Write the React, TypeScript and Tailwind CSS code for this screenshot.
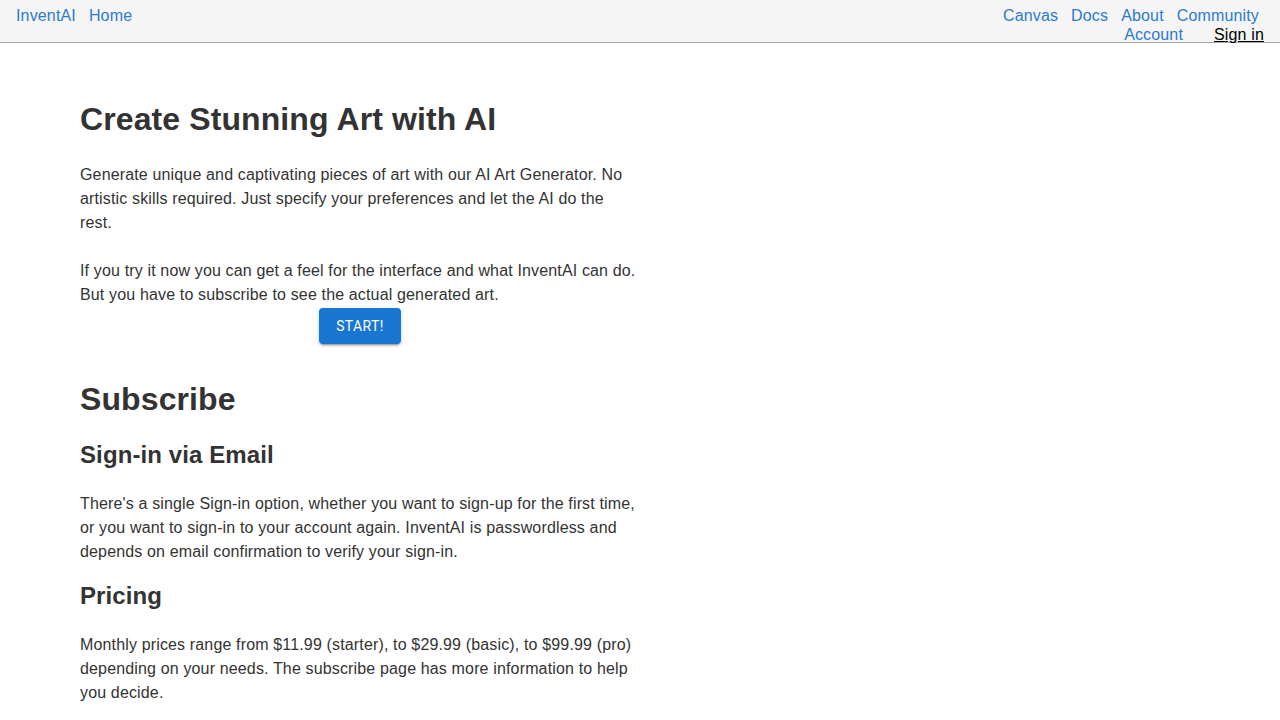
import React from "react";

const font = { fontFamily: '"Liberation Sans", Arial, sans-serif' };

export default function App() {
  return (
    <div className="min-h-[720px] bg-white text-[#333333] tracking-[0.15px]" style={font}>
      <header className="flex h-[43px] justify-between border-b border-[#a8a8a8] bg-[#f5f5f5] text-[16px] leading-[19px]">
        <nav className="flex gap-[13px] pl-[16px] pt-[6px]">
          <a className="text-[#2b7bd0]">InventAI</a>
          <a className="text-[#2b7bd0]">Home</a>
        </nav>
        <div className="flex flex-col items-end pt-[6px]">
          <nav className="mr-[21px] flex gap-[13px]">
            <a className="text-[#2b7bd0]">Canvas</a>
            <a className="text-[#2b7bd0]">Docs</a>
            <a className="text-[#2b7bd0]">About</a>
            <a className="text-[#2b7bd0]">Community</a>
          </nav>
          <nav className="mr-[16px] flex gap-[31px]">
            <a className="text-[#2b7bd0]">Account</a>
            <a className="text-black underline">Sign in</a>
          </nav>
        </div>
      </header>
      <main className="w-[560px] ml-[80px] pt-[57px]">
        <h1 className="text-[32px] font-bold leading-[38px] tracking-[0.1px]">Create Stunning Art with AI</h1>
        <p className="mt-[25px] text-[16px] leading-[24px]">
          Generate unique and captivating pieces of art with our AI Art Generator. No artistic skills required. Just specify your preferences and let the AI do the rest.
        </p>
        <p className="mt-[24px] text-[16px] leading-[24px]">
          If you try it now you can get a feel for the interface and what InventAI can do. But you have to subscribe to see the actual generated art.
        </p>
        <div className="mt-[1px] flex justify-center">
          <button
            className="h-[36px] w-[82px] rounded-[4px] bg-[#1976d2] text-[14px] font-normal uppercase tracking-[0.4px] text-white shadow-[0_3px_1px_-2px_rgba(0,0,0,0.2),0_2px_2px_0_rgba(0,0,0,0.14),0_1px_5px_0_rgba(0,0,0,0.12)]"
            style={{ fontFamily: 'Roboto, "Liberation Sans", sans-serif' }}
          >
            Start!
          </button>
        </div>
        <h2 className="mt-[36px] text-[32px] font-bold leading-[38px] tracking-[0.1px]">Subscribe</h2>
        <h3 className="mt-[22px] text-[24px] font-bold leading-[29px] tracking-[0.1px]">Sign-in via Email</h3>
        <p className="mt-[23px] text-[16px] leading-[24px]">
          There's a single Sign-in option, whether you want to sign-up for the first time, or you want to sign-in to your account again. InventAI is passwordless and depends on email confirmation to verify your sign-in.
        </p>
        <h3 className="mt-[17px] text-[24px] font-bold leading-[29px] tracking-[0.1px]">Pricing</h3>
        <p className="mt-[23px] text-[16px] leading-[24px]">
          Monthly prices range from $11.99 (starter), to $29.99 (basic), to $99.99 (pro) depending on your needs. The subscribe page has more information to help you decide.
        </p>
      </main>
    </div>
  );
}
